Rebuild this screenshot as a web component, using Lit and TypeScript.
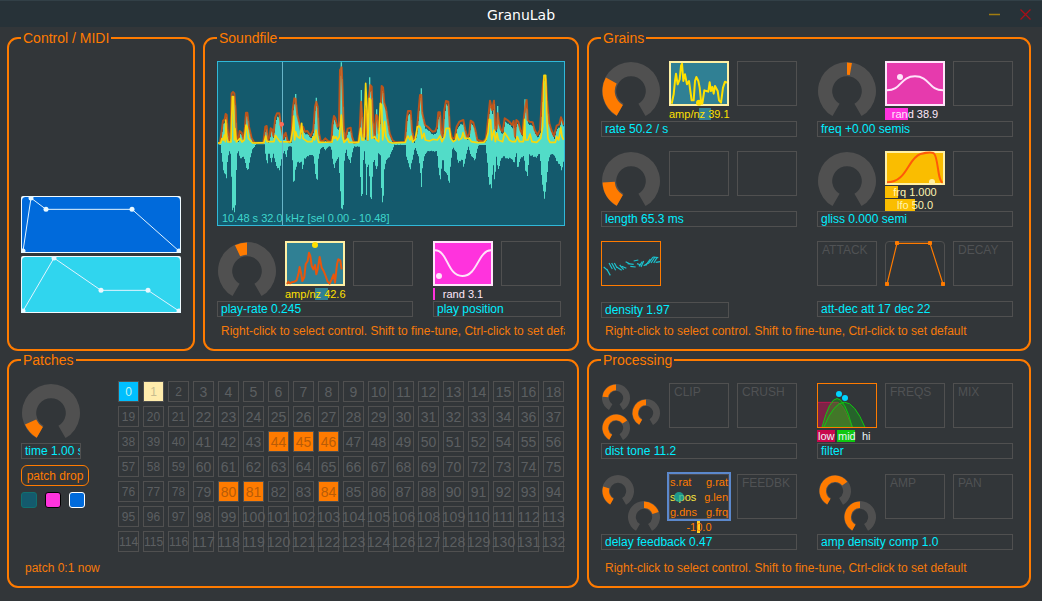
import { LitElement, html, svg, css, nothing } from "lit";
import { customElement, property } from "lit/decorators.js";
import { classMap } from "lit/directives/class-map.js";

type Dial = { x: number; y: number; r: number; from: number; to: number };

/** Path of a ring sector; angles are in degrees, clockwise from the top. */
function sector(cx: number, cy: number, outer: number, inner: number, from: number, to: number): string {
  const at = (radius: number, deg: number) => {
    const a = (deg * Math.PI) / 180;
    return `${(cx + radius * Math.sin(a)).toFixed(2)} ${(cy - radius * Math.cos(a)).toFixed(2)}`;
  };
  const large = to - from > 180 ? 1 : 0;
  return (
    `M${at(outer, from)}A${outer} ${outer} 0 ${large} 1 ${at(outer, to)}` +
    `L${at(inner, to)}A${inner} ${inner} 0 ${large} 0 ${at(inner, from)}Z`
  );
}

@customElement("gl-dials")
export class GlDials extends LitElement {
  static styles = css`
    :host { display: block; width: 60px; height: 60px; }
    svg { display: block; }
    .track { fill: #505050; }
    .value { fill: #ff7b00; }
  `;
  @property({ attribute: false }) dials: Dial[] = [];
  @property() name = "";

  render() {
    return html`<svg width="60" height="60" viewBox="0 0 60 60" role="img" aria-label=${this.name}>
      ${this.dials.map(
        (d) => svg`
          <path class="track" d=${sector(d.x, d.y, d.r, d.r * 0.51, -150, 150)}></path>
          ${d.to > d.from
            ? svg`<path class="value" d=${sector(d.x, d.y, d.r - 0.5, d.r * 0.56, d.from, d.to)}></path>`
            : nothing}`
      )}
    </svg>`;
  }
}

const big = (from: number, to: number): Dial[] => [{ x: 30, y: 30, r: 29, from, to }];

/* Curves are plotted three units to the pixel. */
const AMP_PLAY =
  "6,129 10,122 15,127 20,124 28,122 35,118 40,100 44,78 48,95 52,120 58,108 62,70 68,60 72,35 76,45 80,75 85,85 90,72 94,100 98,85 104,48 110,80 116,90 122,105 128,122 134,128 140,115 146,100 150,125 156,70 160,55 166,58 170,85";
const AMP_RATE =
  "8,128 14,100 18,60 21,38 26,70 32,55 36,15 39,8 43,60 48,40 54,70 60,60 64,90 68,118 74,118 78,60 82,48 88,60 92,80 96,120 100,128 106,88 112,90 118,92 122,64 126,90 130,78 134,98 138,75 146,90 150,118 156,125 162,80 168,62 174,65";

const ENV =
  "51,340 60,338 64,310 69,272 74,268 77,252 80,255 83,300 88,335 92,300 95,190 99,186 103,190 107,240 110,320 115,330 119,303 125,308 131,330 135,290 138,248 142,248 147,290 155,325 163,338 190,338 196,290 200,288 204,330 209,320 212,295 216,298 220,318 226,262 231,250 238,250 243,290 250,325 257,308 262,330 268,337 274,330 278,240 283,205 287,207 292,255 298,280 304,308 309,290 314,305 322,303 332,318 340,300 345,230 349,215 353,230 357,310 362,333 370,332 376,325 384,333 394,336 398,280 402,258 406,265 412,290 417,285 420,120 425,112 428,180 431,290 436,330 443,296 452,293 456,320 462,338 475,335 479,300 483,215 486,250 490,320 495,320 498,240 503,330 507,200 511,165 515,170 519,270 524,325 528,255 532,258 536,310 541,260 545,168 549,172 553,220 558,235 563,270 569,310 577,330 585,337 " +
  "615,336 620,270 624,243 632,243 636,300 642,330 650,310 656,240 660,195 664,195 667,250 675,285 685,292 692,300 698,305 706,303 711,290 715,247 720,247 724,310 728,320 733,240 738,213 745,215 750,300 756,325 764,325 770,290 778,275 790,270 796,300 802,325 808,310 812,272 820,278 826,300 832,330 850,335 858,325 864,270 870,212 876,240 882,212 886,300 890,295 893,250 897,280 903,300 908,305 914,265 922,270 928,275 936,285 941,273 945,320 949,270 955,275 961,300 967,313 972,260 976,230 980,210 983,270 988,275 998,277 1004,300 1012,315 1020,300 1025,220 1029,160 1033,138 1038,150 1042,220 1048,280 1054,300 1062,318 1070,287 1078,283 1083,262 1088,275 1091,285";
const GRAINS =
  "51,339 62,339 66,325 70,330 73,315 76,335 77,270 80,320 84,336 93,336 97,200 100,200 103,330 105,296 109,336 120,325 126,336 133,330 138,285 141,290 145,325 158,339 192,338 197,318 201,335 222,335 226,316 232,325 240,335 272,336 278,300 281,258 284,330 287,305 292,320 300,325 305,280 309,325 322,335 336,335 340,320 344,330 348,300 352,325 356,337 396,336 400,318 404,325 408,320 412,330 418,320 424,255 428,320 432,337 443,325 447,337 476,337 482,295 486,330 492,330 497,160 501,240 504,330 508,205 512,210 515,325 524,320 530,330 536,335 541,220 545,225 548,330 554,275 558,320 566,335 577,339 " +
  "616,337 620,325 624,318 630,330 634,318 638,336 646,328 652,290 658,288 662,295 666,325 672,310 676,330 688,333 700,328 712,330 720,318 726,335 734,320 738,295 748,295 752,325 760,335 767,330 770,312 776,330 785,325 789,308 794,325 808,325 814,335 832,338 852,337 858,330 864,310 868,268 872,270 875,330 882,300 886,335 891,310 895,330 908,335 914,308 922,320 928,330 936,335 946,335 952,320 958,335 970,335 974,268 976,330 984,330 990,312 996,335 1010,337 1022,325 1028,290 1032,136 1037,136 1040,260 1044,325 1050,337 1066,337 1070,320 1076,330 1082,292 1086,320 1091,330";
const WAVE_LOW =
  "51,343 60,345 63,370 66,400 70,430 76,445 79,448 81,400 84,380 88,360 91,380 94,470 96,548 104,548 106,520 109,380 113,360 118,385 124,388 130,380 136,410 142,428 148,395 155,360 163,350 166,343 192,343 197,390 201,405 205,360 209,385 214,402 218,370 223,390 228,415 238,422 245,380 252,365 258,383 263,350 275,350 277,440 281,470 284,430 290,400 303,400 307,425 311,390 318,385 330,375 340,380 345,440 351,455 354,390 359,360 368,350 375,362 383,350 392,350 396,390 402,418 407,395 415,385 419,480 424,550 429,540 431,400 437,355 442,385 450,400 455,375 460,350 478,350 481,500 486,500 490,360 494,370 498,510 502,380 507,450 512,545 516,440 520,385 530,430 534,370 540,380 544,510 548,545 552,420 558,390 566,385 576,360 582,345 598,345 " +
  "615,345 618,380 624,405 630,422 636,390 644,352 654,380 660,430 662,500 665,430 670,385 680,365 710,365 715,430 719,460 723,420 728,380 733,440 737,430 742,445 747,462 751,400 757,350 768,370 773,403 785,390 790,418 796,380 804,350 810,375 824,395 830,360 835,345 855,345 860,390 866,470 874,480 878,400 883,465 888,380 893,428 900,395 908,380 920,390 930,385 942,400 948,370 952,430 958,390 970,380 975,425 982,440 986,375 1007,385 1018,372 1025,460 1031,513 1037,480 1043,400 1050,375 1060,375 1068,395 1077,405 1084,425 1091,390";

const parse = (points: string): number[][] => points.split(" ").map((p) => p.split(",").map(Number));

/** Sample a polyline every three units into flat steps with a little grain. */
function steps(points: string, drop: number, grain: number, axis: number): string {
  const list = parse(points);
  let k = 0;
  let d = `M51 ${axis}`;
  for (let x = 51; x < 1092; x += 3) {
    while (k < list.length - 2 && list[k + 1][0] <= x) k++;
    const [x0, y0] = list[k];
    const [x1, y1] = list[k + 1];
    const t = Math.min(1, Math.max(0, (x - x0) / (x1 - x0)));
    const y = y0 + (y1 - y0) * t;
    const noise = ((x * 7919) % 31) / 31;
    const size = Math.abs(y - axis);
    const level = y + drop - Math.sign(y - axis) * noise * grain * size;
    d += `V${(axis > y ? Math.min(level, axis) : level).toFixed(0)}h3`;
  }
  return `${d}V${axis}Z`;
}

@customElement("gl-waveform")
export class GlWaveform extends LitElement {
  static styles = css`
    :host { display: block; position: relative; height: 165px; border: 1px solid #30b8d8; background: #145a6d; }
    svg { display: block; width: 100%; height: 100%; }
    .body { fill: #52dcc8; }
    .spike { stroke: #52dcc8; stroke-width: 4; }
    .env { fill: none; stroke: #d8550e; stroke-width: 6; stroke-opacity: 0.85; stroke-linejoin: round; }
    .lines { fill: none; stroke: #f8d80c; stroke-width: 5; stroke-linejoin: round; }
    .cursor { stroke: #68b4c8; stroke-width: 3; }
    .grain { fill: #ff6a58; }
    .info { position: absolute; left: 4px; bottom: 1px; font-size: 11px; line-height: 12px; color: #3fd6cc; }
  `;
  render() {
    return html`
      <svg viewBox="54 96 1038 489" preserveAspectRatio="none" role="img" aria-label="Waveform">
        <path class="body" d=${steps(ENV, 8, 0.06, 341)}></path>
        <path class="body" d=${steps(WAVE_LOW, 0, 0.1, 339)}></path>
        ${[[424, 97], [484, 180], [509, 142], [530, 238], [287, 192], [349, 203], [664, 175], [893, 228], [975, 208]].map(
          ([x, y]) => svg`<line class="spike" x1=${x} x2=${x} y1=${y} y2="340"></line>`
        )}
        <polyline class="env" points=${ENV}></polyline>
        <polyline class="lines" points=${GRAINS}></polyline>
        <line class="cursor" x1="247.500" x2="247.500" y1="93" y2="585"></line>
        <circle class="grain" cx="245" cy="283" r="7"></circle>
      </svg>
      <span class="info">10.48 s 32.0 kHz [sel 0.00 - 10.48]</span>
    `;
  }
}

@customElement("app-root")
export class AppRoot extends LitElement {
  static styles = css`
    :host {
      display: flex;
      flex-direction: column;
      box-sizing: border-box;
      min-height: 100vh;
      background: #323639;
      color: #ff7b00;
      font: 12px/16px "Liberation Sans", Arial, sans-serif;
    }
    * { box-sizing: border-box; }
    button { font: inherit; color: inherit; background: none; border: 0; padding: 0; margin: 0; }

    .titlebar {
      display: grid;
      grid-template-columns: 1fr auto 1fr;
      align-items: center;
      height: 27px;
      padding: 2px 6px 0;
      background: #273238;
      border-top: 1px solid #324047;
    }
    .title { grid-column: 2; margin: 0; font: 14px/20px "DejaVu Sans", sans-serif; color: #fff; }
    .window { display: flex; justify-content: flex-end; gap: 8px; }
    .window button { width: 22px; height: 22px; }
    .window svg { display: block; }

    .panels {
      flex: 1;
      display: grid;
      grid-template-columns: 188fr 376fr 444fr;
      grid-template-rows: 321fr 236fr;
      gap: 1px 8px;
      padding: 3px 11px 13px 7px;
    }
    fieldset {
      display: flex;
      flex-direction: column;
      min-width: 0;
      margin: 0;
      padding: 15px 12px 0;
      border: 2px solid #ff7b00;
      border-radius: 11px;
    }
    legend { padding: 0 2px; font-size: 14px; line-height: 16px; }
    .wide { grid-column: span 2; }

    .control { justify-content: flex-end; gap: 3px; padding-bottom: 36px; }
    .env { display: block; width: 100%; height: 57px; }
    .env .frame { fill: #f2fbff; }
    .env polyline { fill: none; stroke: #e2f4ff; stroke-width: 3; }
    .env circle { fill: #e8f8ff; }
    .blue { fill: #006adb; }
    .cyan { fill: #30d5ee; }

    .groups { display: flex; flex-wrap: wrap; gap: 14px 20px; margin-top: 15px; }
    .first { margin-top: 0; }
    .spaced { row-gap: 15px; }
    .group { width: 196px; height: 76px; display: flex; flex-direction: column; justify-content: space-between; }
    .narrow { width: 128px; }
    .sole { margin-right: 68px; }
    .sole .readout { margin-bottom: -1px; }
    .cells { display: flex; gap: 8px; height: 60px; }
    .cell { width: 60px; height: 45px; border: 1px solid #505050; padding: 1px 4px; color: #505254; line-height: 15px; }
    .stack { display: flex; flex-direction: column; gap: 2px; width: 60px; }
    .pair { gap: 1px; }
    .display { display: block; width: 60px; height: 45px; }
    .short { height: 34px; }
    .display .line { fill: none; stroke-width: 6; stroke-linejoin: round; }
    .meter { position: relative; height: 12px; font-size: 11px; line-height: 13px; text-align: center; white-space: nowrap; }
    .bar { position: absolute; top: 0; height: 12px; }
    .meter span { position: relative; }
    .readout {
      display: block;
      height: 16px;
      padding: 0 3px;
      border: 1px solid #505050;
      color: #00eeff;
      line-height: 14px;
      overflow: hidden;
      white-space: nowrap;
    }
    .hint { margin: 6px 0 0; padding-left: 4px; overflow: hidden; white-space: nowrap; color: #f67a0a; }
    .low { margin-top: 10px; }

    .tags { display: grid; grid-template-columns: repeat(3, 20px); font-size: 11px; line-height: 13px; color: #e8f4f8; }
    .tag { width: 18px; height: 12px; padding-left: 1px; }
    .tag-low { background: #c8084c; }
    .tag-mid { background: #10c810; }
    .tag-hi { padding-left: 5px; }

    .matrix {
      position: relative;
      display: grid;
      grid-template-columns: auto auto;
      justify-content: space-between;
      width: 60px;
      height: 45px;
      border: 1px solid #4a4a50;
      box-shadow: 0 0 0 2px #5b88cc;
      font-size: 11px;
      line-height: 15px;
    }
    .matrix span:nth-of-type(even) { text-align: right; }
    .matrix .on { color: #f8e840; }
    .spot { position: absolute; left: 4px; top: 17px; width: 10px; height: 10px; border-radius: 50%; background: #18b8a8; opacity: 0.75; }

    .patches { padding-top: 13px; }
    .bank { display: grid; grid-template-columns: 97px auto; justify-content: start; }
    .tools { display: flex; flex-direction: column; gap: 6px; padding-top: 2px; }
    .clock { width: 60px; }
    .drop { width: 68px; height: 21px; border: 1px solid #ff7b00; border-radius: 6px; }
    .swatches { display: flex; gap: 8px; }
    .swatches button { width: 16px; height: 16px; border: 1px solid; border-radius: 3px; }
    .swatches .teal { background: #145a6d; border-color: #107070; }
    .swatches .pink { background: #ff33dd; border-color: #000; }
    .swatches .azure { background: #006adb; border-color: #fff; }
    .slots { display: grid; grid-template-columns: repeat(18, 21px); grid-auto-rows: 21px; gap: 4px; }
    .slots button {
      display: flex;
      justify-content: center;
      align-items: center;
      padding-top: 1px;
      box-shadow: inset 0 0 0 1px #505050;
      color: #5c5f61;
      font-size: 14px;
    }
    .slots .small { font-size: 12px; }
    .slots .stored { background: #ff7b00; color: #b85c08; }
    .slots .current { background: #00bfff; color: #c0f4f0; }
    .slots .next { background: #ffecac; color: #c8bc90; }
    .status { margin-top: 8px; }
  `;

  private cell(text = "") {
    return html`<div class="cell">${text}</div>`;
  }

  private group(name: string, cells: unknown, extra = "") {
    return html`<div class="group ${extra}">
      <div class="cells">${cells}</div>
      <output class="readout">${name}</output>
    </div>`;
  }

  private meter(text: string, color: string, fill: string, left: number, width: number) {
    return html`<div class="meter" style="color:${color}">
      <div class="bar" style="left:${left}px;width:${width}px;background:${fill}"></div>
      <span>${text}</span>
    </div>`;
  }

  /** Modulation display: framed plot with one curve and a handle. */
  private display(fill: string, frame: string, line: unknown, dot: [number, number, string], height = 135) {
    return html`<svg class="display ${height < 135 ? "short" : ""}" viewBox="0 0 180 ${height}">
      <rect x="3" y="3" width="174" height=${height - 6} fill=${fill} stroke=${frame} stroke-width="6"></rect>
      ${line}
      <circle cx=${dot[0]} cy=${dot[1]} r="9" fill=${dot[2]}></circle>
    </svg>`;
  }

  private envelope(points: number[][], tone: string) {
    return html`<svg class="env" viewBox="0 0 480 171" preserveAspectRatio="none">
      <path class="frame" d="M0 171V6Q0 0 6 0H474Q480 0 480 6V171Z"></path>
      <path class=${tone} d="M3 168V14Q3 3 14 3H466Q477 3 477 14V168Z"></path>
      <polyline points=${points.map((p) => p.join()).join(" ")}></polyline>
      ${points.map(([x, y]) => svg`<circle cx=${x} cy=${y} r="7.500"></circle>`)}
    </svg>`;
  }

  private slots() {
    const stored = [44, 45, 46, 80, 81, 84];
    const numbers = Array.from({ length: 133 }, (_, i) => i).filter((n) => n % 18 !== 17);
    return numbers.map(
      (n, i) => html`<button
        class=${classMap({ small: i % 18 < 3, stored: stored.includes(n), current: n === 0, next: n === 1 })}
      >${n}</button>`
    );
  }

  render() {
    const dials = (name: string, list: Dial[]) => html`<gl-dials .name=${name} .dials=${list}></gl-dials>`;
    const hint = "Right-click to select control. Shift to fine-tune, Ctrl-click to set default";
    const dashes = [
      [8, 78, 20, 88], [17, 84, 28, 103], [24, 66, 34, 84], [32, 66, 44, 88], [40, 66, 48, 80], [47, 78, 62, 88],
      [56, 72, 68, 86], [62, 76, 76, 82], [74, 62, 86, 68], [80, 68, 98, 70], [88, 76, 104, 78], [98, 60, 112, 57],
      [108, 68, 120, 72], [114, 76, 124, 62], [120, 78, 128, 60], [128, 74, 142, 66], [134, 74, 148, 54],
      [142, 68, 156, 48], [150, 66, 162, 48], [158, 66, 168, 50], [156, 48, 172, 50], [164, 64, 178, 62],
    ];
    return html`
      <header class="titlebar">
        <h1 class="title">GranuLab</h1>
        <div class="window">
          <button aria-label="Minimise">
            <svg width="22" height="22" viewBox="0 0 22 22"><path d="M5 10.500H16" stroke="#a07c10" stroke-width="1.500"></path></svg>
          </button>
          <button aria-label="Close">
            <svg width="22" height="22" viewBox="0 0 22 22"><path d="M6.500 5.500L16.500 15.500M16.500 5.500L6.500 15.500" stroke="#a80f18" stroke-width="1.300"></path></svg>
          </button>
        </div>
      </header>
      <main class="panels">
        <fieldset class="control">
          <legend>Control / MIDI</legend>
          ${this.envelope([[6, 165], [30, 6], [75, 40], [333, 40], [474, 165]], "blue")}
          ${this.envelope([[6, 165], [99, 6], [240, 103], [381, 103], [474, 165]], "cyan")}
        </fieldset>

        <fieldset>
          <legend>Soundfile</legend>
          <gl-waveform></gl-waveform>
          <div class="groups">
            ${this.group("play-rate 0.245", html`
              ${dials("play-rate", big(-25, 0))}
              <div class="stack">
                ${this.display("#308094", "#fff0a4", svg`<polyline class="line" stroke="#e8560c" points=${AMP_PLAY}></polyline>`, [90, 12, "#ffe000"])}
                ${this.meter("amp/nz 42.6", "#ffe000", "#308094", 30, 13)}
              </div>
              ${this.cell()}`)}
            ${this.group("play position", html`
              <div class="stack">
                ${this.display("#ff33dd", "#ffe4fa", svg`<path class="line" stroke="#ffe4fa" d="M6 28C45 28 42 105 88 105S135 28 174 28"></path>`, [18, 105, "#ffe4fa"])}
                ${this.meter("rand 3.1", "#ffe8fa", "#ff33dd", 0, 2)}
              </div>
              ${this.cell()}`, "narrow")}
          </div>
          <p class="hint">${hint}</p>
        </fieldset>

        <fieldset>
          <legend>Grains</legend>
          <div class="groups first">
            ${this.group("rate 50.2 / s", html`
              ${dials("rate", big(-150, -62))}
              <div class="stack">
                ${this.display("#308094", "#fff0a4", svg`<polyline class="line" stroke="#ffe000" points=${AMP_RATE}></polyline>`, [90, 125, "#ffe000"])}
                ${this.meter("amp/nz 39.1", "#ffe000", "#308094", 30, 12)}
              </div>
              ${this.cell()}`)}
            ${this.group("freq +0.00 semis", html`
              ${dials("freq", big(0, 10))}
              <div class="stack">
                ${this.display("#e63aad", "#ffe4fa", svg`<path class="line" stroke="#ffe4fa" d="M6 88C50 88 45 46 90 46S130 88 174 88"></path>`, [45, 48, "#ffe4fa"])}
                ${this.meter("rand 38.9", "#ffe8fa", "#ff33dd", 0, 23)}
              </div>
              ${this.cell()}`)}
            ${this.group("length 65.3 ms", html`${dials("length", big(-150, -93))}${this.cell()}${this.cell()}`)}
            ${this.group("gliss 0.000 semi", html`
              ${dials("gliss", big(0, 0))}
              <div class="stack pair">
                ${this.display("#fabd00", "#fff0a4", svg`<path class="line" stroke="#ff5a08" d="M6 94C66 94 68 22 106 9Q142 0 148 9C160 24 158 90 173 95"></path>`, [141, 93, "#fff0a4"], 102)}
                ${this.meter("frq 1.000", "#fff4b0", "#fabd00", 0, 13)}
                ${this.meter("lfo 50.0", "#fff4b0", "#fabd00", 0, 30)}
              </div>
              ${this.cell()}`)}
            ${this.group("density 1.97", html`
              <svg class="display" viewBox="0 0 180 135">
                <rect x="1.500" y="1.500" width="177" height="132" fill="none" stroke="#ff7b00" stroke-width="3"></rect>
                ${dashes.map(([a, b, c, d]) => svg`<line x1=${a} y1=${b} x2=${c} y2=${d} stroke="#1cc4d0" stroke-width="3.500"></line>`)}
              </svg>`, "narrow sole")}
            ${this.group("att-dec att 17 dec 22", html`
              ${this.cell("ATTACK")}
              <svg class="display" viewBox="0 0 180 135">
                <path d="M1.500 133.500V12Q1.500 1.500 12 1.500H168Q178.500 1.500 178.500 12V133.500Z" fill="none" stroke="#505050" stroke-width="3"></path>
                <polyline points="6,129 36,7 135,7 174,129" fill="none" stroke="#ff7b00" stroke-width="3.500"></polyline>
                ${[[6, 129], [36, 6], [135, 6], [174, 129]].map(([x, y]) => svg`<rect x=${x - 6} y=${y - 6} width="12" height="12" rx="2" fill="#ff7b00"></rect>`)}
              </svg>
              ${this.cell("DECAY")}`)}
          </div>
          <p class="hint">${hint}</p>
        </fieldset>

        <fieldset class="wide patches">
          <legend>Patches</legend>
          <div class="bank">
            <div class="tools">
              <div class="clock">
                ${dials("time", big(-150, -114))}
                <output class="readout">time 1.00 s</output>
              </div>
              <button class="drop">patch drop</button>
              <div class="swatches">
                <button class="teal" aria-label="Teal"></button>
                <button class="pink" aria-label="Pink"></button>
                <button class="azure" aria-label="Blue"></button>
              </div>
            </div>
            <div class="slots">${this.slots()}</div>
          </div>
          <p class="hint status">patch 0:1 now</p>
        </fieldset>

        <fieldset>
          <legend>Processing</legend>
          <div class="groups first spaced">
            ${this.group("dist tone 11.2", html`
              ${dials("dist tone", [
                { x: 15, y: 15, r: 14, from: -85, to: 0 },
                { x: 45, y: 30, r: 14, from: -150, to: 0 },
                { x: 15, y: 45, r: 14, from: -150, to: 56 },
              ])}
              ${this.cell("CLIP")}${this.cell("CRUSH")}`)}
            ${this.group("filter", html`
              <div class="stack">
                <svg class="display" viewBox="0 0 180 135">
                  <path d="M3 57H62C82 66 92 105 107 133H3Z" fill="#b01850" fill-opacity=".6"></path>
                  <path d="M3 58H62C82 66 92 105 107 133" fill="none" stroke="#b81850" stroke-width="3"></path>
                  <path d="M15 133Q60-40 106 133Z" fill="#10c010" fill-opacity=".32" stroke="#10c810" stroke-width="3"></path>
                  <path d="M20 133Q82-18 144 133Z" fill="#10c010" fill-opacity=".32" stroke="#10c810" stroke-width="3"></path>
                  <circle cx="66" cy="33" r="9" fill="#00d4ff"></circle>
                  <circle cx="84" cy="45" r="9" fill="#00d4ff"></circle>
                  <rect x="1.500" y="1.500" width="177" height="132" fill="none" stroke="#ff7b00" stroke-width="3"></rect>
                </svg>
                <div class="tags">
                  <span class="tag tag-low">low</span><span class="tag tag-mid">mid</span><span class="tag tag-hi">hi</span>
                </div>
              </div>
              ${this.cell("FREQS")}${this.cell("MIX")}`)}
            ${this.group("delay feedback 0.47", html`
              ${dials("delay feedback", [
                { x: 17, y: 17, r: 16, from: -150, to: -73 },
                { x: 43, y: 43, r: 16, from: 0, to: 71 },
              ])}
              <div class="stack">
                <div class="matrix">
                  <span>s.rat</span><span>g.rat</span>
                  <span class="on">s.pos</span><span>g.len</span>
                  <span>g.dns</span><span>g.frq</span>
                  <i class="spot"></i>
                </div>
                ${this.meter("-10.0", "#ff7b00", "#ffd020", 28, 3)}
              </div>
              ${this.cell("FEEDBK")}`)}
            ${this.group("amp density comp 1.0", html`
              ${dials("amp density comp", [
                { x: 18, y: 17, r: 16, from: -150, to: 53 },
                { x: 43, y: 43, r: 16, from: -150, to: 0 },
              ])}
              ${this.cell("AMP")}${this.cell("PAN")}`)}
          </div>
          <p class="hint low">${hint}</p>
        </fieldset>
      </main>
    `;
  }
}
